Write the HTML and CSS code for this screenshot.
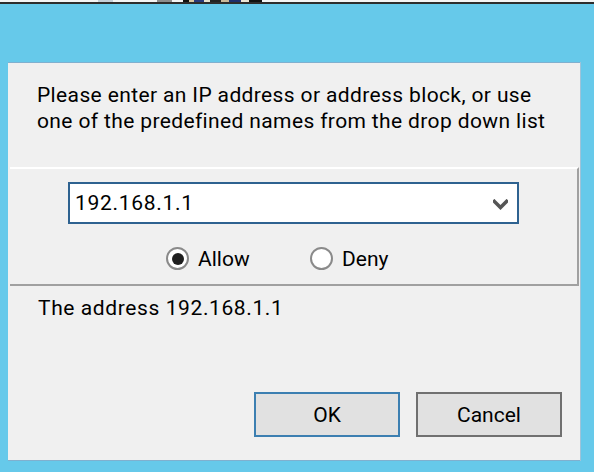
FILE: index.html
```html
<!DOCTYPE html>
<html lang="en">
<head>
<meta charset="utf-8">
<title>IP Address</title>
<link rel="stylesheet" href="styles.css">
</head>
<body>
<div class="strip">
  <span class="frag w98 white"></span>
  <span class="frag w15 pale"></span>
  <span class="frag w44 white"></span>
  <span class="frag w15 grey"></span>
  <span class="frag w11 white"></span>
  <span class="frag w79 ink"></span>
  <span class="frag fill white"></span>
</div>
<div class="rule"></div>

<div class="dialog">
  <p class="prompt">Please enter an IP address or address block, or use<br>one of the predefined names from the drop down list</p>

  <div class="panel">
    <div class="combo">
      <span class="combo-value">192.168.1.1</span>
      <svg class="chevron" width="15" height="11" viewBox="0 0 15 11" aria-hidden="true">
        <path d="M1.4 2.4 L7.5 8.5 L13.6 2.4" fill="none" stroke="#555" stroke-width="3.6" stroke-linecap="square"/>
      </svg>
    </div>
    <div class="radios">
      <label class="radio on"><span class="dot"></span><span class="lbl">Allow</span></label>
      <label class="radio"><span class="dot"></span><span class="lbl">Deny</span></label>
    </div>
  </div>

  <p class="status">The address 192.168.1.1</p>

  <div class="actions">
    <button class="btn default">OK</button>
    <button class="btn">Cancel</button>
  </div>
</div>
</body>
</html>
```
FILE: styles.css
```css
html, body {
  margin: 0;
  padding: 0;
}

body {
  width: 594px;
  height: 472px;
  overflow: hidden;
  background: #66c9ea;
  font-family: "Segoe UI", Roboto, "Noto Sans", sans-serif;
  font-size: 21px;
  color: #000;
}

.strip {
  display: flex;
  height: 2px;
}
.frag { height: 2px; flex: none; }
.w98 { width: 98px; }
.w15 { width: 15px; }
.w44 { width: 44px; }
.w11 { width: 11px; }
.w79 { width: 79px; }
.fill { flex: 1; }
.white { background: #f4f4f4; }
.pale { background: #c5cfd8; }
.grey { background: #8d8d8d; }
.ink { background: linear-gradient(90deg, #111 0 8%, #d9c7a0 8% 14%, #2a3a7a 14% 26%, #e8e2d0 26% 34%, #222 34% 48%, #c9b89a 48% 58%, #1e2f6d 58% 74%, #ece6d6 74% 84%, #111 84% 100%); }

.rule {
  height: 2px;
  background: #2d2d2d;
}

.dialog {
  margin: 58px 0 0 8px;
  width: 572px;
  height: 397px;
  background: #f0f0f0;
  border-top: 1px solid #80b0cf;
  border-bottom: 1px solid #80b0cf;
  box-shadow: 1px 0 0 #9ec3da;
  display: flex;
  flex-direction: column;
}

.prompt {
  margin: 19px 0 0 29px;
  line-height: 26px;
  letter-spacing: 0.37px;
}

.panel {
  margin: 33px 1px 0 2px;
  height: 115px;
  border-top: 2px solid #ffffff;
  border-right: 2px solid #a0a0a0;
  border-bottom: 2px solid #a0a0a0;
  display: flex;
  flex-direction: column;
}

.combo {
  margin: 13px 0 0 58px;
  width: 451px;
  height: 42px;
  box-sizing: border-box;
  border: 2px solid #2e6290;
  background: #fff;
  display: flex;
  align-items: center;
  justify-content: space-between;
  padding: 0 9px 0 5px;
}

.combo-value {
  line-height: 26px;
  letter-spacing: 0.7px;
}

.chevron {
  display: block;
  margin-top: 2px;
}

.radios {
  display: grid;
  grid-template-columns: 144px auto;
  margin: 22px 0 0 156px;
  height: 23px;
  align-items: center;
}

.radio {
  display: flex;
  align-items: center;
  gap: 9px;
  line-height: 23px;
}

.lbl {
  padding-top: 2px;
}

.dot {
  width: 23px;
  height: 23px;
  box-sizing: border-box;
  border: 2px solid #8a8a8a;
  border-radius: 50%;
  background: #fff;
  display: flex;
  align-items: center;
  justify-content: center;
  flex: none;
}

.radio.on .dot::after {
  content: "";
  width: 12px;
  height: 12px;
  border-radius: 50%;
  background: #1f1f1f;
}

.status {
  margin: 9px 0 0 30px;
  line-height: 26px;
  letter-spacing: 0.6px;
}

.actions {
  margin-top: auto;
  display: flex;
  justify-content: flex-end;
  gap: 16px;
  padding: 0 18px 23px 0;
}

.btn {
  width: 146px;
  height: 45px;
  box-sizing: border-box;
  background: #e1e1e1;
  border: 2px solid #707070;
  font: inherit;
  color: #000;
  padding: 2px 0 0;
  line-height: 39px;
}

.btn.default {
  border-color: #3c7fb1;
}
```
